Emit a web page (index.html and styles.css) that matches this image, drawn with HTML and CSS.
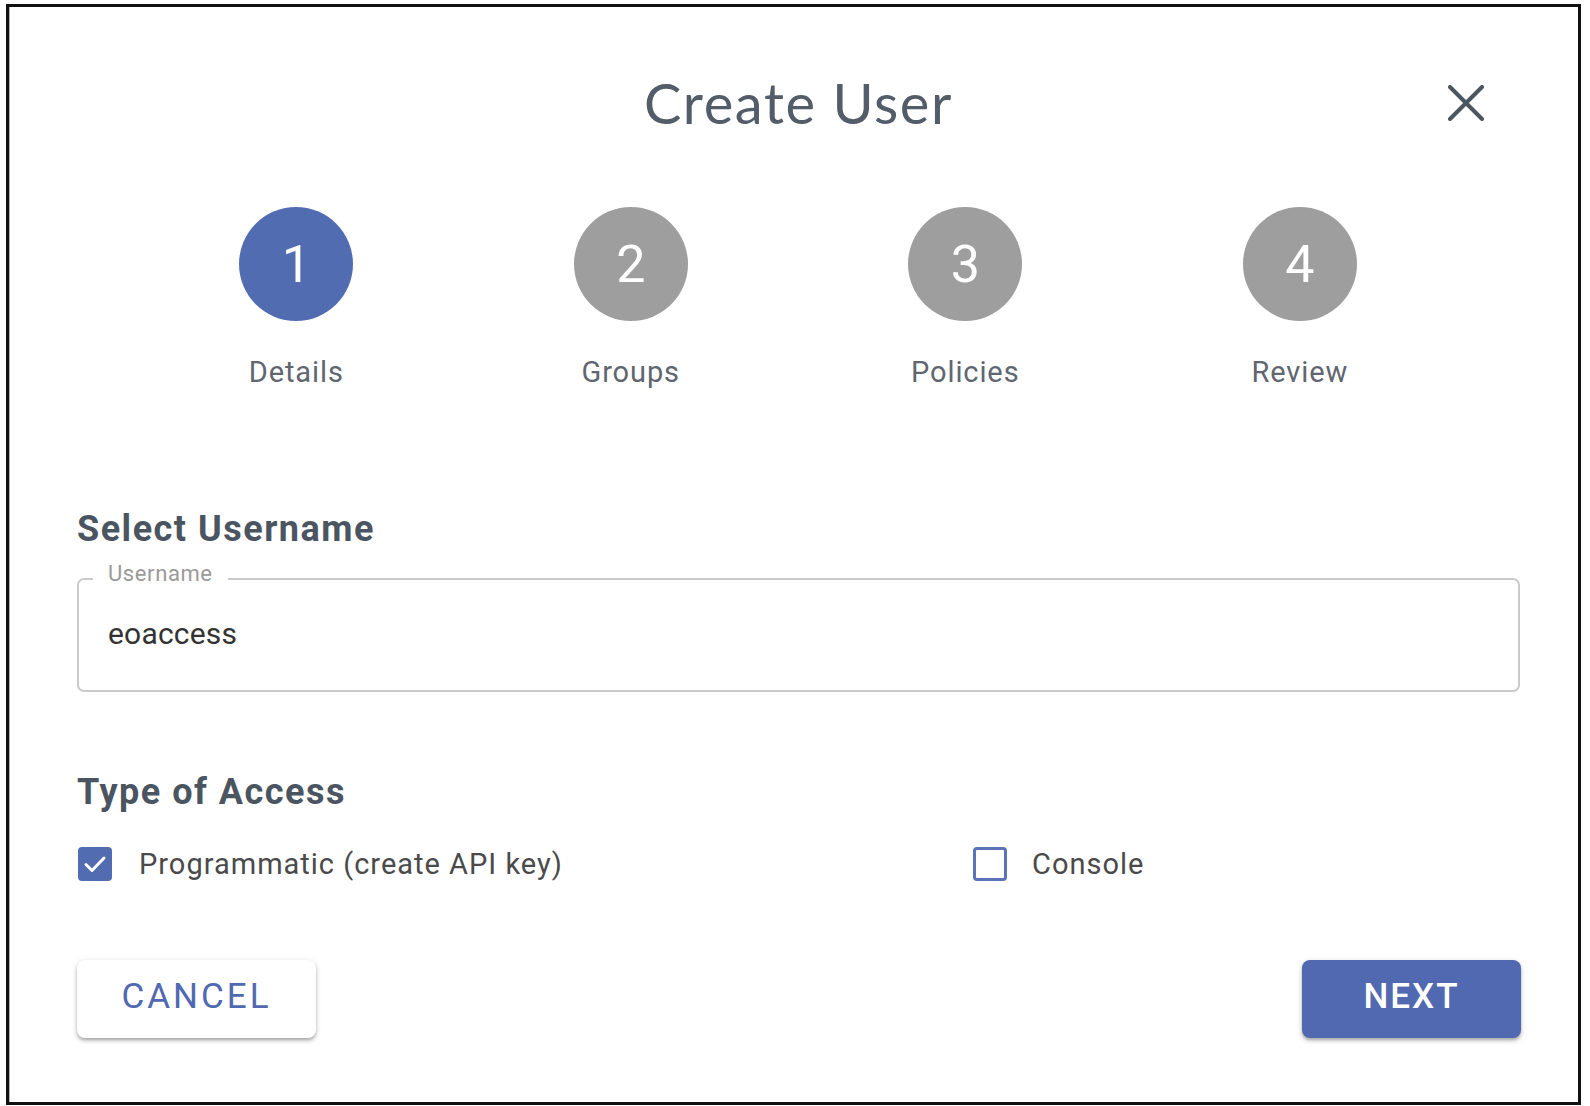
FILE: index.html
```html
<!DOCTYPE html>
<html lang="en">
<head>
<meta charset="utf-8">
<title>Create User</title>
<link rel="stylesheet" href="styles.css">
</head>
<body>
<div class="frame">
  <div class="dialog">
    <header class="header">
      <span class="spacer"></span>
      <h1 class="title">Create User</h1>
      <button class="close" aria-label="Close">
        <svg width="36" height="36" viewBox="0 0 36 36"><path d="M2 2 L34 34 M34 2 L2 34" stroke="#4b5661" stroke-width="4" stroke-linecap="round" fill="none"/></svg>
      </button>
    </header>

    <div class="steps">
      <div class="step">
        <div class="circle active">1</div>
        <div class="step-label">Details</div>
      </div>
      <div class="step">
        <div class="circle">2</div>
        <div class="step-label">Groups</div>
      </div>
      <div class="step">
        <div class="circle">3</div>
        <div class="step-label">Policies</div>
      </div>
      <div class="step">
        <div class="circle">4</div>
        <div class="step-label">Review</div>
      </div>
    </div>

    <h2 class="section-title first">Select Username</h2>
    <div class="field">
      <span class="field-label">Username</span>
      <span class="field-value">eoaccess</span>
    </div>

    <h2 class="section-title second">Type of Access</h2>
    <div class="options">
      <label class="option">
        <span class="checkbox checked">
          <svg width="28" height="28" viewBox="0 0 28 28"><path d="M5 14.5 L11 20.5 L23 8" stroke="#fff" stroke-width="3" fill="none" stroke-linecap="round" stroke-linejoin="round"/></svg>
        </span>
        <span class="option-text">Programmatic (create API key)</span>
      </label>
      <label class="option">
        <span class="checkbox"></span>
        <span class="option-text">Console</span>
      </label>
    </div>

    <div class="actions">
      <button class="btn btn-cancel">CANCEL</button>
      <button class="btn btn-next">NEXT</button>
    </div>
  </div>
</div>
</body>
</html>
```
FILE: styles.css
```css
* { box-sizing: border-box; }

html, body {
  margin: 0;
  padding: 0;
  background: #ffffff;
}

body {
  font-family: Roboto, "Liberation Sans", sans-serif;
}

.frame {
  margin: 4px 0 0 6px;
  width: 1575px;
  height: 1101px;
  border: 3px solid #111111;
  box-shadow: inset 1px 0 0 #b5b5b5;
  background: #ffffff;
}

.dialog {
  padding: 61px 58px 0 68px;
  display: flex;
  flex-direction: column;
}

.header {
  display: grid;
  grid-template-columns: 1fr auto 1fr;
  align-items: center;
  height: 70px;
}

.title {
  margin: 0;
  font-family: Lato, "Open Sans", sans-serif;
  font-weight: 400;
  font-size: 56px;
  line-height: 70px;
  letter-spacing: 1.6px;
  color: #535d69;
  text-align: center;
}

.close {
  justify-self: end;
  margin-right: 30px;
  width: 48px;
  height: 48px;
  padding: 0;
  border: none;
  background: transparent;
  display: flex;
  align-items: center;
  justify-content: center;
}

.steps {
  margin: 69px 53px 0 52px;
  display: grid;
  grid-template-columns: repeat(4, 1fr);
}

.step {
  display: flex;
  flex-direction: column;
  align-items: center;
}

.circle {
  width: 114px;
  height: 114px;
  border-radius: 50%;
  background: #9e9e9e;
  color: #ffffff;
  font-size: 52px;
  font-weight: 400;
  display: flex;
  align-items: center;
  justify-content: center;
}

.circle.active {
  background: #516cb1;
}

.step-label {
  margin-top: 34px;
  font-size: 29px;
  line-height: 34px;
  letter-spacing: 0.9px;
  color: #5f6670;
}

.section-title {
  margin: 0;
  font-size: 36px;
  line-height: 40px;
  font-weight: 700;
  letter-spacing: 1.5px;
  color: #4a5561;
}

.section-title.first { margin-top: 120px; }
.section-title.second { margin-top: 80px; }

.field {
  position: relative;
  margin-top: 29px;
  height: 114px;
  border: 2px solid #cacaca;
  border-radius: 7px;
  display: flex;
  align-items: center;
  padding-left: 29px;
  padding-bottom: 3px;
}

.field-label {
  position: absolute;
  left: 14px;
  top: -18px;
  padding: 0 15px;
  background: #ffffff;
  font-size: 22px;
  line-height: 24px;
  letter-spacing: 0.6px;
  color: #9a9a9a;
}

.field-value {
  font-size: 30px;
  color: #333333;
  letter-spacing: 0.2px;
}

.options {
  margin-top: 35px;
  display: grid;
  grid-template-columns: 895px 1fr;
  height: 34px;
}

.option {
  display: flex;
  align-items: center;
  gap: 27px;
  padding-left: 1px;
}

.option + .option {
  gap: 25px;
}

.checkbox {
  width: 34px;
  height: 34px;
  border: 3px solid #5a74b6;
  border-radius: 4px;
  background: #ffffff;
  display: flex;
  align-items: center;
  justify-content: center;
}

.checkbox.checked {
  background: #516cb1;
  border-color: #516cb1;
}

.option-text {
  font-size: 29px;
  letter-spacing: 1px;
  color: #4a4a4a;
}

.actions {
  margin-top: 79px;
  display: flex;
  justify-content: space-between;
}

.btn {
  height: 78px;
  border: none;
  border-radius: 8px;
  padding-bottom: 6px;
  font-family: Roboto, "Liberation Sans", sans-serif;
  font-size: 35px;
  letter-spacing: 2px;
  box-shadow: 0 3px 4px rgba(0,0,0,0.18), 0 2px 2px rgba(0,0,0,0.12), 0 1px 6px rgba(0,0,0,0.10);
}

.btn-cancel {
  width: 239px;
  background: #ffffff;
  color: #5169b1;
  font-weight: 400;
  letter-spacing: 3px;
}

.btn-next {
  width: 219px;
  background: #5169b1;
  color: #ffffff;
  font-weight: 500;
  margin-right: -1px;
}
```
